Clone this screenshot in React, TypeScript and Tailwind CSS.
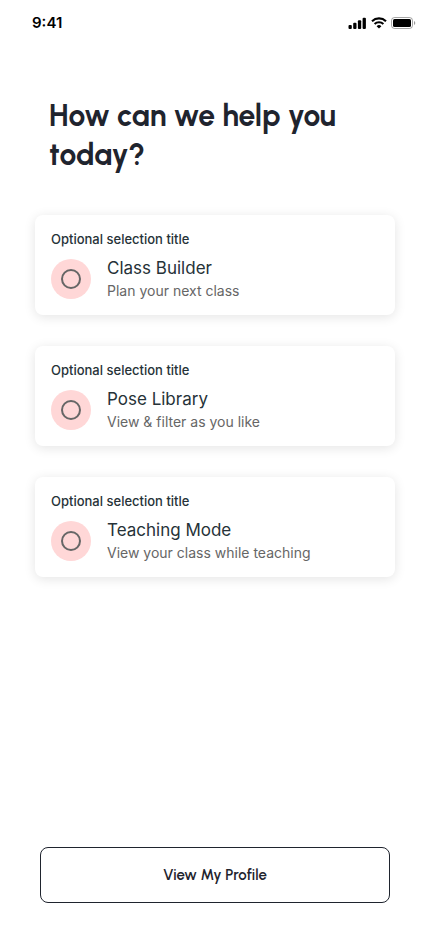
type Option = { id: string; title: string; detail: string };

const options: Option[] = [
  { id: "builder", title: "Class Builder", detail: "Plan your next class" },
  { id: "library", title: "Pose Library", detail: "View & filter as you like" },
  { id: "teaching", title: "Teaching Mode", detail: "View your class while teaching" },
];

function StatusBar() {
  return (
    <header className="flex h-[46px] items-center justify-between pr-[14px] pl-8">
      <span className="text-[15px] leading-5 font-semibold text-black">9:41</span>
      <div className="flex items-center gap-1 text-black">
        <svg width="19" height="12" viewBox="0 0 19 12" fill="currentColor" aria-hidden="true">
          <rect x="0.5" y="8" width="3.3" height="4" rx="1" />
          <rect x="5.2" y="5.7" width="3.3" height="6.3" rx="1" />
          <rect x="9.9" y="3.3" width="3.3" height="8.7" rx="1" />
          <rect x="14.6" y="0.8" width="3.3" height="11.2" rx="1" />
        </svg>
        <svg width="16" height="12" viewBox="0 0 16 12" fill="none" stroke="currentColor" strokeWidth="2.1" aria-hidden="true">
          <path d="M1 4.2A10.2 10.2 0 0 1 15 4.2" />
          <path d="M3.6 7A6.4 6.4 0 0 1 12.4 7" />
          <path d="M8 11.6 5.6 9.2a3.4 3.4 0 0 1 4.8 0Z" fill="currentColor" stroke="none" />
        </svg>
        <svg width="25" height="12" viewBox="0 0 25 12" aria-hidden="true">
          <rect x="0.5" y="0.5" width="21" height="11" rx="3" fill="none" stroke="#000" strokeOpacity="0.35" />
          <rect x="2" y="2" width="18" height="8" rx="1.5" fill="#000" />
          <path d="M23 4v4a2.2 2.2 0 0 0 0-4Z" fill="#000" fillOpacity="0.4" />
        </svg>
      </div>
    </header>
  );
}

function OptionCard({ option }: { option: Option }) {
  return (
    <label
      htmlFor={option.id}
      className="block cursor-pointer rounded-lg bg-white px-4 pt-4 pb-[13px] shadow-[0_2px_12px_rgba(0,0,0,0.11)]"
    >
      <span className="block text-[13px] leading-4 font-medium text-[#263238]">Optional selection title</span>
      <span className="mt-[9px] flex items-center gap-4">
        <span className="flex size-10 shrink-0 items-center justify-center rounded-full bg-[#ffd7d7]">
          <input
            id={option.id}
            type="radio"
            name="destination"
            className="size-5 appearance-none rounded-full border-2 border-[#666666] checked:border-[6px]"
          />
        </span>
        <span className="block">
          <span className="block text-[17px] leading-6 text-[#263238]">{option.title}</span>
          <span className="block text-sm leading-[22px] text-[#666666]">{option.detail}</span>
        </span>
      </span>
    </label>
  );
}

export default function App() {
  return (
    <div className="flex min-h-screen flex-col bg-white font-['Inter',sans-serif]">
      <StatusBar />
      <main className="flex grow flex-col pb-[29px]">
        <h1 className="mt-[50px] px-[49px] font-['Urbanist','Lato',sans-serif] text-[30px] leading-[39px] font-bold text-[#1f242e]">
          How can we help you today?
        </h1>
        <div className="mt-[41px] flex flex-col gap-[31px] px-[35px]">
          {options.map((option) => (
            <OptionCard key={option.id} option={option} />
          ))}
        </div>
        <div className="mt-auto px-10 pt-8">
          <button
            type="button"
            className="h-14 w-full rounded-lg border border-[#1f242e] font-['Urbanist','Lato',sans-serif] text-[15px] font-semibold text-[#1f242e]"
          >
            View My Profile
          </button>
        </div>
      </main>
    </div>
  );
}
